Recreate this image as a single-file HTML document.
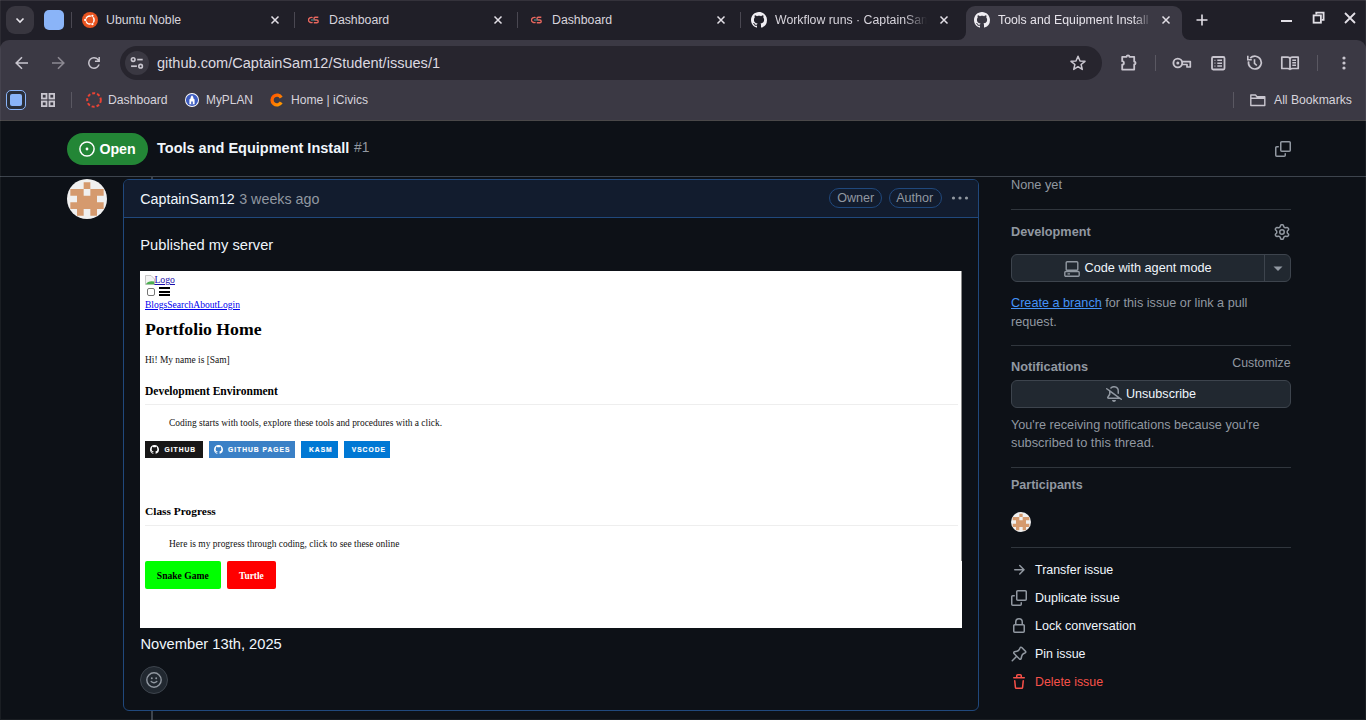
<!DOCTYPE html>
<html><head><meta charset="utf-8"><style>
html,body{margin:0;padding:0;width:1366px;height:720px;overflow:hidden;background:#0d1117;}
body{position:relative;font-family:'Liberation Sans', sans-serif;}
</style></head><body>
<div style="position:absolute;left:0px;top:0px;width:1366px;height:40px;background:#201f28;"></div><div style="position:absolute;left:0px;top:0px;width:1366px;height:1px;background:#34323b;"></div><div style="position:absolute;left:0px;top:40px;width:1366px;height:12px;background:#201f28;"></div><div style="position:absolute;left:0px;top:40px;width:1366px;height:80px;background:#3b3944;border-radius:9px 9px 0 0;"></div><div style="position:absolute;left:6px;top:6px;width:28px;height:28px;background:#38363f;border-radius:9px;"></div><svg style="position:absolute;left:13px;top:13px;" width="14" height="14" viewBox="0 0 14 14"><path d="M3.5 5.5 L7 9 L10.5 5.5" fill="none" stroke="#e8e6ec" stroke-width="1.6"/></svg><div style="position:absolute;left:44px;top:10px;width:20px;height:20px;background:#8ab4f8;border-radius:5px;"></div><div style="position:absolute;left:71px;top:12px;width:1px;height:16px;background:#4a4852;"></div><svg style="position:absolute;left:82px;top:12px;" width="16" height="16" viewBox="0 0 16 16"><circle cx="8" cy="8" r="8" fill="#e95420"/><circle cx="8" cy="8" r="4.1" fill="none" stroke="#fff" stroke-width="1.5"/><circle cx="3.2" cy="8" r="1.8" fill="#e95420"/><circle cx="10.4" cy="3.85" r="1.8" fill="#e95420"/><circle cx="10.4" cy="12.15" r="1.8" fill="#e95420"/><circle cx="3.2" cy="8" r="1.15" fill="#fff"/><circle cx="10.4" cy="3.85" r="1.15" fill="#fff"/><circle cx="10.4" cy="12.15" r="1.15" fill="#fff"/></svg><div style="position:absolute;left:106px;top:13.89px;font:400 12.3px/12.3px 'Liberation Sans', sans-serif;color:#d7d4dc;white-space:nowrap;">Ubuntu Noble</div><svg style="position:absolute;left:270px;top:15px;" width="10" height="10" viewBox="0 0 10 10"><path d="M1.5 1.5 L8.5 8.5 M8.5 1.5 L1.5 8.5" stroke="#e2dfe6" stroke-width="1.5"/></svg><div style="position:absolute;left:294px;top:12px;width:1px;height:16px;background:#4a4852;"></div><svg style="position:absolute;left:308px;top:16px;" width="11" height="8" viewBox="0 0 11 8"><path d="M4.6 1.6 A3 2.6 0 1 0 4.6 6.4" fill="none" stroke="#e8675e" stroke-width="1.4"/><path d="M10.3 1.2 H7.2 Q6 1.2 6 2.6 Q6 4 7.4 4 H8.8 Q10.2 4 10.2 5.4 Q10.2 6.8 8.8 6.8 H5.8" fill="none" stroke="#e8675e" stroke-width="1.4"/><path d="M3 4 H7" stroke="#4a8c8c" stroke-width="1.2"/></svg><div style="position:absolute;left:329px;top:13.89px;font:400 12.3px/12.3px 'Liberation Sans', sans-serif;color:#d7d4dc;white-space:nowrap;">Dashboard</div><svg style="position:absolute;left:493px;top:15px;" width="10" height="10" viewBox="0 0 10 10"><path d="M1.5 1.5 L8.5 8.5 M8.5 1.5 L1.5 8.5" stroke="#e2dfe6" stroke-width="1.5"/></svg><div style="position:absolute;left:517px;top:12px;width:1px;height:16px;background:#4a4852;"></div><svg style="position:absolute;left:531px;top:16px;" width="11" height="8" viewBox="0 0 11 8"><path d="M4.6 1.6 A3 2.6 0 1 0 4.6 6.4" fill="none" stroke="#e8675e" stroke-width="1.4"/><path d="M10.3 1.2 H7.2 Q6 1.2 6 2.6 Q6 4 7.4 4 H8.8 Q10.2 4 10.2 5.4 Q10.2 6.8 8.8 6.8 H5.8" fill="none" stroke="#e8675e" stroke-width="1.4"/><path d="M3 4 H7" stroke="#4a8c8c" stroke-width="1.2"/></svg><div style="position:absolute;left:552px;top:13.89px;font:400 12.3px/12.3px 'Liberation Sans', sans-serif;color:#d7d4dc;white-space:nowrap;">Dashboard</div><svg style="position:absolute;left:716px;top:15px;" width="10" height="10" viewBox="0 0 10 10"><path d="M1.5 1.5 L8.5 8.5 M8.5 1.5 L1.5 8.5" stroke="#e2dfe6" stroke-width="1.5"/></svg><div style="position:absolute;left:740px;top:12px;width:1px;height:16px;background:#4a4852;"></div><svg style="position:absolute;left:751px;top:12px;" width="16" height="16" viewBox="0 0 16 16"><path fill="#f0eef3" d="M8 0C3.58 0 0 3.58 0 8c0 3.54 2.29 6.53 5.47 7.59.4.07.55-.17.55-.38 0-.19-.01-.82-.01-1.49-2.01.37-2.53-.49-2.69-.94-.09-.23-.48-.94-.82-1.13-.28-.15-.68-.52-.01-.53.63-.01 1.08.58 1.23.82.72 1.21 1.87.87 2.33.66.07-.52.28-.87.51-1.07-1.78-.2-3.64-.89-3.64-3.95 0-.87.31-1.59.82-2.15-.08-.2-.36-1.02.08-2.12 0 0 .67-.21 2.2.82.64-.18 1.32-.27 2-.27.68 0 1.36.09 2 .27 1.53-1.04 2.2-.82 2.2-.82.44 1.1.16 1.92.08 2.12.51.56.82 1.27.82 2.15 0 3.07-1.87 3.75-3.65 3.95.29.25.54.73.54 1.48 0 1.07-.01 1.93-.01 2.2 0 .21.15.46.55.38A8.013 8.013 0 0016 8c0-4.42-3.58-8-8-8z"/></svg><div style="position:absolute;left:775px;top:13.89px;width:152px;overflow:hidden;font:400 12.3px/12.3px 'Liberation Sans', sans-serif;color:#d7d4dc;white-space:nowrap;-webkit-mask-image:linear-gradient(90deg,#000 85%,transparent);">Workflow runs · CaptainSam12/Student</div><svg style="position:absolute;left:939px;top:15px;" width="10" height="10" viewBox="0 0 10 10"><path d="M1.5 1.5 L8.5 8.5 M8.5 1.5 L1.5 8.5" stroke="#e2dfe6" stroke-width="1.5"/></svg><div style="position:absolute;left:966px;top:6px;width:216px;height:40px;background:#3b3944;border-radius:9px 9px 0 0;"></div><svg style="position:absolute;left:958px;top:32px;" width="8" height="8" viewBox="0 0 8 8"><path d="M8 0 V8 H0 A8 8 0 0 0 8 0Z" fill="#3b3944"/></svg><svg style="position:absolute;left:1182px;top:32px;" width="8" height="8" viewBox="0 0 8 8"><path d="M0 0 V8 H8 A8 8 0 0 1 0 0Z" fill="#3b3944"/></svg><svg style="position:absolute;left:974px;top:12px;" width="16" height="16" viewBox="0 0 16 16"><path fill="#f0eef3" d="M8 0C3.58 0 0 3.58 0 8c0 3.54 2.29 6.53 5.47 7.59.4.07.55-.17.55-.38 0-.19-.01-.82-.01-1.49-2.01.37-2.53-.49-2.69-.94-.09-.23-.48-.94-.82-1.13-.28-.15-.68-.52-.01-.53.63-.01 1.08.58 1.23.82.72 1.21 1.87.87 2.33.66.07-.52.28-.87.51-1.07-1.78-.2-3.64-.89-3.64-3.95 0-.87.31-1.59.82-2.15-.08-.2-.36-1.02.08-2.12 0 0 .67-.21 2.2.82.64-.18 1.32-.27 2-.27.68 0 1.36.09 2 .27 1.53-1.04 2.2-.82 2.2-.82.44 1.1.16 1.92.08 2.12.51.56.82 1.27.82 2.15 0 3.07-1.87 3.75-3.65 3.95.29.25.54.73.54 1.48 0 1.07-.01 1.93-.01 2.2 0 .21.15.46.55.38A8.013 8.013 0 0016 8c0-4.42-3.58-8-8-8z"/></svg><div style="position:absolute;left:998px;top:13.89px;width:154px;overflow:hidden;font:400 12.3px/12.3px 'Liberation Sans', sans-serif;color:#e6e3ea;white-space:nowrap;-webkit-mask-image:linear-gradient(90deg,#000 88%,transparent);">Tools and Equipment Install #1</div><svg style="position:absolute;left:1161px;top:15px;" width="10" height="10" viewBox="0 0 10 10"><path d="M1.5 1.5 L8.5 8.5 M8.5 1.5 L1.5 8.5" stroke="#e2dfe6" stroke-width="1.5"/></svg><svg style="position:absolute;left:1195px;top:13px;" width="14" height="14" viewBox="0 0 14 14"><path d="M7 1.5 V12.5 M1.5 7 H12.5" stroke="#e2dfe6" stroke-width="1.6"/></svg><div style="position:absolute;left:1281px;top:20px;width:11px;height:2px;background:#e2dfe6;"></div><svg style="position:absolute;left:1311px;top:10px;" width="16" height="16" viewBox="0 0 16 16"><path d="M5.3 4.6 V2.6 H12.6 V9.9 H10.6" fill="none" stroke="#e2dfe6" stroke-width="1.8"/><rect x="2.6" y="5.4" width="7.3" height="7.3" fill="none" stroke="#e2dfe6" stroke-width="1.8"/></svg><svg style="position:absolute;left:1343px;top:11px;" width="14" height="14" viewBox="0 0 14 14"><path d="M2 2 L12 12 M12 2 L2 12" stroke="#e2dfe6" stroke-width="1.8"/></svg><svg style="position:absolute;left:12px;top:53px;" width="20" height="20" viewBox="0 0 20 20"><path d="M16 10 H4.5 M10 4.2 L4.2 10 L10 15.8" fill="none" stroke="#c9c6cf" stroke-width="1.6"/></svg><svg style="position:absolute;left:48px;top:53px;" width="20" height="20" viewBox="0 0 20 20"><path d="M4 10 H15.5 M10 4.2 L15.8 10 L10 15.8" fill="none" stroke="#8c8992" stroke-width="1.6"/></svg><svg style="position:absolute;left:84px;top:53px;" width="20" height="20" viewBox="0 0 20 20"><path fill="#c9c6cf" d="M10 16q-2.5 0-4.25-1.75T4 10q0-2.5 1.75-4.25T10 4q1.35 0 2.5.55t1.95 1.5V4h1.5v5h-5V7.5h2.85q-.6-.95-1.6-1.475T10 5.5q-1.875 0-3.187 1.313Q5.5 8.125 5.5 10t1.313 3.188Q8.125 14.5 10 14.5q1.4 0 2.55-.8t1.6-2.2h1.6q-.55 2.050-2.212 3.275Q11.875 16 10 16Z"/></svg><div style="position:absolute;left:120px;top:46px;width:982px;height:34px;background:#27252e;border-radius:17px;"></div><div style="position:absolute;left:125px;top:51px;width:24px;height:24px;border-radius:12px;background:#3a3842;"></div><svg style="position:absolute;left:127px;top:53px;" width="20" height="20" viewBox="0 0 20 20"><circle cx="6.2" cy="6.6" r="1.8" fill="none" stroke="#c9c6cf" stroke-width="1.6"/><path d="M10.2 6.6 H15.7" stroke="#c9c6cf" stroke-width="1.7"/><circle cx="13.6" cy="13.2" r="1.8" fill="none" stroke="#c9c6cf" stroke-width="1.6"/><path d="M4.1 13.2 H9.9" stroke="#c9c6cf" stroke-width="1.7"/></svg><div style="position:absolute;left:157px;top:55.69px;font:400 14.55px/14.55px 'Liberation Sans', sans-serif;color:#dcd9e0;white-space:nowrap;">github.com/CaptainSam12/Student/issues/1</div><svg style="position:absolute;left:1068px;top:53px;" width="20" height="20" viewBox="0 0 20 20"><path d="M10 3.2 L12 8 L17 8.3 L13.1 11.5 L14.3 16.4 L10 13.7 L5.7 16.4 L6.9 11.5 L3 8.3 L8 8 Z" fill="none" stroke="#c9c6cf" stroke-width="1.5" stroke-linejoin="round"/></svg><svg style="position:absolute;left:1118px;top:53px;" width="22" height="20" viewBox="0 0 22 20"><path d="M4.2 3.8 H8.6 A1.4 1.4 0 0 1 11.4 3.8 H16.2 V8.6 A1.4 1.4 0 0 1 16.2 11.4 V16.6 H4.2 V11.6 A1.7 1.7 0 0 0 4.2 8.2 Z" fill="none" stroke="#c9c6cf" stroke-width="1.8" stroke-linejoin="round"/></svg><div style="position:absolute;left:1155px;top:55px;width:1px;height:16px;background:#5a5862;"></div><svg style="position:absolute;left:1170px;top:53px;" width="24" height="20" viewBox="0 0 24 20"><circle cx="7.8" cy="10" r="4.4" fill="none" stroke="#c9c6cf" stroke-width="1.9"/><circle cx="7.8" cy="10" r="1.5" fill="#c9c6cf"/><path d="M12 8.6 H20.3 V14 H17 V11.5 H12" fill="none" stroke="#c9c6cf" stroke-width="1.7" stroke-linejoin="round"/></svg><svg style="position:absolute;left:1208px;top:53px;" width="20" height="20" viewBox="0 0 20 20"><rect x="4" y="4" width="12.5" height="12.5" rx="1.2" fill="none" stroke="#c9c6cf" stroke-width="1.8"/><path d="M6.5 7.3 H7.4 M6.5 10.2 H7.4 M6.5 13.1 H7.4" stroke="#c9c6cf" stroke-width="1.2"/><path d="M9.3 7.3 H14 M9.3 10.2 H14 M9.3 13.1 H14" stroke="#c9c6cf" stroke-width="1.5"/></svg><svg style="position:absolute;left:1244px;top:53px;" width="20" height="20" viewBox="0 0 20 20"><path d="M4.6 8.3 A6.4 6.4 0 1 0 6.2 5.2" fill="none" stroke="#c9c6cf" stroke-width="1.7"/><path d="M3.8 2.8 V6.8 H7.8" fill="none" stroke="#c9c6cf" stroke-width="1.6"/><path d="M10.5 6.2 V10.3 L12.8 12.5" fill="none" stroke="#c9c6cf" stroke-width="1.6"/></svg><svg style="position:absolute;left:1280px;top:53px;" width="20" height="20" viewBox="0 0 20 20"><path d="M1.8 4.2 H7.5 Q10 4.2 10 6.2 V16.3 Q9.6 15.5 7.5 15.5 H1.8 Z M18.2 4.2 H12.5 Q10 4.2 10 6.2 V16.3 Q10.4 15.5 12.5 15.5 H18.2 Z" fill="none" stroke="#c9c6cf" stroke-width="1.7" stroke-linejoin="round"/><path d="M12.3 7.3 H16 M12.3 9.8 H16 M12.3 12.3 H16" stroke="#c9c6cf" stroke-width="1.4"/></svg><div style="position:absolute;left:1317px;top:55px;width:1px;height:16px;background:#5a5862;"></div><svg style="position:absolute;left:1339px;top:53px;" width="10" height="20" viewBox="0 0 10 20"><circle cx="5" cy="5" r="1.6" fill="#c9c6cf"/><circle cx="5" cy="10" r="1.6" fill="#c9c6cf"/><circle cx="5" cy="15" r="1.6" fill="#c9c6cf"/></svg><div style="position:absolute;left:6px;top:90px;width:18px;height:18px;border:1px solid #8ab4f8;border-radius:5px;background:#2a2f3a;"></div><div style="position:absolute;left:10px;top:94px;width:12px;height:12px;background:#8ab4f8;border-radius:2px;"></div><svg style="position:absolute;left:40px;top:92px;" width="16" height="16" viewBox="0 0 16 16"><rect x="1.9" y="1.9" width="4.6" height="4.6" fill="none" stroke="#c9c6cf" stroke-width="1.8"/><rect x="9.5" y="1.9" width="4.6" height="4.6" fill="none" stroke="#c9c6cf" stroke-width="1.8"/><rect x="1.9" y="9.5" width="4.6" height="4.6" fill="none" stroke="#c9c6cf" stroke-width="1.8"/><rect x="9.5" y="9.5" width="4.6" height="4.6" fill="none" stroke="#c9c6cf" stroke-width="1.8"/></svg><div style="position:absolute;left:71px;top:92px;width:1px;height:16px;background:#5a5862;"></div><svg style="position:absolute;left:86px;top:92px;" width="16" height="16" viewBox="0 0 16 16"><circle cx="8" cy="8" r="6.8" fill="none" stroke="#ea4335" stroke-width="2" stroke-dasharray="3 2"/></svg><div style="position:absolute;left:108px;top:94.18px;font:400 12.2px/12.2px 'Liberation Sans', sans-serif;color:#d7d4dc;white-space:nowrap;">Dashboard</div><svg style="position:absolute;left:184px;top:92px;" width="16" height="16" viewBox="0 0 16 16"><circle cx="8" cy="8" r="7" fill="#fff"/><circle cx="8" cy="8" r="6.1" fill="#3d5cc0"/><path d="M8 3.2 L9.3 5 V6.3 L10.6 7.5 V12.3 H5.4 V7.5 L6.7 6.3 V5 Z" fill="#fff"/><rect x="7.2" y="9.5" width="1.6" height="2.8" fill="#3d5cc0"/></svg><div style="position:absolute;left:206px;top:95.23px;font:400 11.9px/11.9px 'Liberation Sans', sans-serif;color:#d7d4dc;white-space:nowrap;">MyPLAN</div><svg style="position:absolute;left:269px;top:92px;" width="16" height="16" viewBox="0 0 16 16"><defs><linearGradient id="icg" x1="0" y1="0" x2="1" y2="1"><stop offset="0" stop-color="#ff5500"/><stop offset="1" stop-color="#ff9a00"/></linearGradient></defs><path d="M12.2 5.6 A4.9 4.9 0 1 0 12.2 10.4" fill="none" stroke="url(#icg)" stroke-width="3.3"/></svg><div style="position:absolute;left:291px;top:94.26px;font:400 12.1px/12.1px 'Liberation Sans', sans-serif;color:#d7d4dc;white-space:nowrap;">Home | iCivics</div><div style="position:absolute;left:1233px;top:92px;width:1px;height:16px;background:#5a5862;"></div><svg style="position:absolute;left:1249px;top:92px;" width="18" height="16" viewBox="0 0 18 16"><path d="M1.8 3 H6.5 L8 4.7 H15.8 V13.5 H1.8 Z M1.8 6.2 H15.8" fill="none" stroke="#c9c6cf" stroke-width="1.4" stroke-linejoin="round"/></svg><div style="position:absolute;left:1274px;top:94.18px;font:400 12.2px/12.2px 'Liberation Sans', sans-serif;color:#d7d4dc;white-space:nowrap;">All Bookmarks</div><div style="position:absolute;left:0px;top:120px;width:1366px;height:600px;background:#0d1117;"></div><div style="position:absolute;left:151px;top:176px;width:2px;height:544px;background:#3d444d;"></div><div style="position:absolute;left:0px;top:120px;width:1366px;height:56px;background:#0d1117;"></div><div style="position:absolute;left:0px;top:176px;width:1366px;height:1px;background:#3d444d;"></div><div style="position:absolute;left:67px;top:133px;width:81px;height:32px;border-radius:16px;background:#238636;"></div><svg style="position:absolute;left:79px;top:141px;" width="16" height="16" viewBox="0 0 16 16"><circle cx="8" cy="8" r="7.1" fill="none" stroke="#fff" stroke-width="1.5"/><circle cx="8" cy="8" r="1.4" fill="#fff"/></svg><div style="position:absolute;left:99.4px;top:142.29px;font:700 14.2px/14.2px 'Liberation Sans', sans-serif;color:#ffffff;white-space:nowrap;">Open</div><div style="position:absolute;left:157px;top:140.93px;font:700 14.5px/14.5px 'Liberation Sans', sans-serif;color:#f0f6fc;white-space:nowrap;">Tools and Equipment Install</div><div style="position:absolute;left:354px;top:141.03px;font:400 13.8px/13.8px 'Liberation Sans', sans-serif;color:#9198a1;white-space:nowrap;">#1</div><svg style="position:absolute;left:1275px;top:141px;" width="16" height="16" viewBox="0 0 16 16"><path fill="#9198a1" d="M0 6.75C0 5.784.784 5 1.75 5h1.5a.75.75 0 0 1 0 1.5h-1.5a.25.25 0 0 0-.25.25v7.5c0 .138.112.25.25.25h7.5a.25.25 0 0 0 .25-.25v-1.5a.75.75 0 0 1 1.5 0v1.5A1.75 1.75 0 0 1 9.25 16h-7.5A1.75 1.75 0 0 1 0 14.25Z"/><path fill="#9198a1" d="M5 1.75C5 .784 5.784 0 6.75 0h7.5C15.216 0 16 .784 16 1.75v7.5A1.75 1.75 0 0 1 14.25 11h-7.5A1.75 1.75 0 0 1 5 9.25Zm1.75-.25a.25.25 0 0 0-.25.25v7.5c0 .138.112.25.25.25h7.5a.25.25 0 0 0 .25-.25v-7.5a.25.25 0 0 0-.25-.25Z"/></svg><svg style="position:absolute;left:67px;top:179px;" width="40" height="40" viewBox="0 0 40 40"><clipPath id="c67"><circle cx="20.0" cy="20.0" r="20.0"/></clipPath><g clip-path="url(#c67)"><rect width="40" height="40" fill="#f0f0f0"/><path d="M16.667 3.333h6.667v6.667h-6.667ZM3.333 10.000h6.667v6.667h-6.667ZM10.000 10.000h6.667v6.667h-6.667ZM23.333 10.000h6.667v6.667h-6.667ZM30.000 10.000h6.667v6.667h-6.667ZM10.000 16.667h6.667v6.667h-6.667ZM16.667 16.667h6.667v6.667h-6.667ZM23.333 16.667h6.667v6.667h-6.667ZM3.333 23.333h6.667v6.667h-6.667ZM10.000 23.333h6.667v6.667h-6.667ZM16.667 23.333h6.667v6.667h-6.667ZM23.333 23.333h6.667v6.667h-6.667ZM30.000 23.333h6.667v6.667h-6.667ZM10.000 30.000h6.667v6.667h-6.667ZM23.333 30.000h6.667v6.667h-6.667Z" fill="#d59a6e"/></g></svg><div style="position:absolute;left:123px;top:179px;width:854px;height:530px;border:1px solid #20487c;border-radius:6px;background:#0d1117;overflow:hidden;"><div style="position:absolute;left:0;top:0;width:854px;height:37px;background:#121c2e;border-bottom:1px solid #20487c;"></div></div><div style="position:absolute;left:140.3px;top:192.13px;font:400 14.27px/14.27px 'Liberation Sans', sans-serif;color:#f0f6fc;white-space:nowrap;">CaptainSam12</div><div style="position:absolute;left:239.2px;top:192.10px;font:400 14.3px/14.3px 'Liberation Sans', sans-serif;color:#9198a1;white-space:nowrap;">3 weeks ago</div><div style="position:absolute;left:829px;top:188px;width:51px;height:18px;border:1px solid #20487c;border-radius:10px;"></div><div style="position:absolute;left:837.15px;top:191.64px;font:400 12.6px/12.6px 'Liberation Sans', sans-serif;color:#9198a1;white-space:nowrap;">Owner</div><div style="position:absolute;left:889px;top:188px;width:51px;height:18px;border:1px solid #20487c;border-radius:10px;"></div><div style="position:absolute;left:896.15px;top:191.64px;font:400 12.6px/12.6px 'Liberation Sans', sans-serif;color:#9198a1;white-space:nowrap;">Author</div><svg style="position:absolute;left:951px;top:190px;" width="18" height="16" viewBox="0 0 18 16"><circle cx="2.5" cy="8" r="1.6" fill="#9198a1"/><circle cx="9" cy="8" r="1.6" fill="#9198a1"/><circle cx="15.5" cy="8" r="1.6" fill="#9198a1"/></svg><div style="position:absolute;left:140.3px;top:237.58px;font:400 14.68px/14.68px 'Liberation Sans', sans-serif;color:#f0f6fc;white-space:nowrap;">Published my server</div><div style="position:absolute;left:140px;top:271px;width:822px;height:357px;background:#fff;overflow:hidden;"><svg style="position:absolute;left:5px;top:4px" width="10" height="10" viewBox="0 0 10 10"><path d="M0.5 9.5 V0.5 H6 L9.5 4 V9.5 Z" fill="#f4f4f4" stroke="#bbb" stroke-width="0.8"/><path d="M0.8 9.2 Q3 5.5 9.2 6.5 V9.2 Z" fill="#4caf50"/></svg><div style="position:absolute;left:14.400000000000006px;top:4.33px;font:400 9.76px/9.76px 'Liberation Serif', serif;color:#1a0dab;white-space:nowrap;text-decoration:underline;">Logo</div><div style="position:absolute;left:7px;top:17px;width:8px;height:8px;background:#fff;border:1px solid #767676;border-radius:2px;box-sizing:border-box;"></div><div style="position:absolute;left:19px;top:16px;width:11px;height:2px;background:#000;"></div><div style="position:absolute;left:19px;top:19.5px;width:11px;height:2px;background:#000;"></div><div style="position:absolute;left:19px;top:23px;width:11px;height:2px;background:#000;"></div><div style="position:absolute;left:5px;top:29.00px;font:400 9.55px/9.55px 'Liberation Serif', serif;color:#0000ee;white-space:nowrap;text-decoration:underline;">BlogsSearchAboutLogin</div><div style="position:absolute;left:5px;top:50.25px;font:700 17.73px/17.73px 'Liberation Serif', serif;color:#000;white-space:nowrap;">Portfolio Home</div><div style="position:absolute;left:5px;top:85.41px;font:400 9.42px/9.42px 'Liberation Serif', serif;color:#111;white-space:nowrap;">Hi! My name is [Sam]</div><div style="position:absolute;left:5px;top:115.23px;font:700 11.55px/11.55px 'Liberation Serif', serif;color:#000;white-space:nowrap;">Development Environment</div><div style="position:absolute;left:5px;top:133px;width:813px;height:1px;background:#eeeeee;"></div><div style="position:absolute;left:29px;top:147.91px;font:400 9.42px/9.42px 'Liberation Serif', serif;color:#111;white-space:nowrap;">Coding starts with tools, explore these tools and procedures with a click.</div><div style="position:absolute;left:5px;top:170px;width:58px;height:17px;background:#181717;"></div><svg style="position:absolute;left:10px;top:174px" width="9" height="9" viewBox="0 0 16 16"><path fill="#fff" d="M8 0C3.58 0 0 3.58 0 8c0 3.54 2.29 6.53 5.47 7.59.4.07.55-.17.55-.38 0-.19-.01-.82-.01-1.49-2.01.37-2.53-.49-2.69-.94-.09-.23-.48-.94-.82-1.13-.28-.15-.68-.52-.01-.53.63-.01 1.08.58 1.23.82.72 1.21 1.87.87 2.33.66.07-.52.28-.87.51-1.07-1.78-.2-3.64-.89-3.64-3.95 0-.87.31-1.59.82-2.15-.08-.2-.36-1.02.08-2.12 0 0 .67-.21 2.2.82.64-.18 1.32-.27 2-.27.68 0 1.36.09 2 .27 1.53-1.04 2.2-.82 2.2-.82.44 1.1.16 1.92.08 2.12.51.56.82 1.27.82 2.15 0 3.07-1.87 3.75-3.65 3.95.29.25.54.73.54 1.48 0 1.07-.01 1.93-.01 2.2 0 .21.15.46.55.38A8.013 8.013 0 0016 8c0-4.42-3.58-8-8-8z"/></svg><div style="position:absolute;left:24.5px;top:170px;height:17px;font:700 6.7px/17px 'Liberation Sans', sans-serif;letter-spacing:1.0px;-webkit-text-stroke:0.15px #fff;color:#fff;white-space:nowrap;">GITHUB</div><div style="position:absolute;left:69px;top:170px;width:86px;height:17px;background:#3a80c6;"></div><svg style="position:absolute;left:74px;top:174px" width="9" height="9" viewBox="0 0 16 16"><path fill="#fff" d="M8 0C3.58 0 0 3.58 0 8c0 3.54 2.29 6.53 5.47 7.59.4.07.55-.17.55-.38 0-.19-.01-.82-.01-1.49-2.01.37-2.53-.49-2.69-.94-.09-.23-.48-.94-.82-1.13-.28-.15-.68-.52-.01-.53.63-.01 1.08.58 1.23.82.72 1.21 1.87.87 2.33.66.07-.52.28-.87.51-1.07-1.78-.2-3.64-.89-3.64-3.95 0-.87.31-1.59.82-2.15-.08-.2-.36-1.02.08-2.12 0 0 .67-.21 2.2.82.64-.18 1.32-.27 2-.27.68 0 1.36.09 2 .27 1.53-1.04 2.2-.82 2.2-.82.44 1.1.16 1.92.08 2.12.51.56.82 1.27.82 2.15 0 3.07-1.87 3.75-3.65 3.95.29.25.54.73.54 1.48 0 1.07-.01 1.93-.01 2.2 0 .21.15.46.55.38A8.013 8.013 0 0016 8c0-4.42-3.58-8-8-8z"/></svg><div style="position:absolute;left:88px;top:170px;height:17px;font:700 6.7px/17px 'Liberation Sans', sans-serif;letter-spacing:1.0px;-webkit-text-stroke:0.15px #fff;color:#fff;white-space:nowrap;">GITHUB PAGES</div><div style="position:absolute;left:161px;top:170px;width:37px;height:17px;background:#0078d4;"></div><div style="position:absolute;left:169px;top:170px;height:17px;font:700 6.7px/17px 'Liberation Sans', sans-serif;letter-spacing:1.0px;-webkit-text-stroke:0.15px #fff;color:#fff;white-space:nowrap;">KASM</div><div style="position:absolute;left:204px;top:170px;width:46px;height:17px;background:#0078d4;"></div><div style="position:absolute;left:211.7px;top:170px;height:17px;font:700 6.7px/17px 'Liberation Sans', sans-serif;letter-spacing:1.0px;-webkit-text-stroke:0.15px #fff;color:#fff;white-space:nowrap;">VSCODE</div><div style="position:absolute;left:5px;top:235.25px;font:700 11.4px/11.4px 'Liberation Serif', serif;color:#000;white-space:nowrap;">Class Progress</div><div style="position:absolute;left:5px;top:254px;width:813px;height:1px;background:#eeeeee;"></div><div style="position:absolute;left:29px;top:268.59px;font:400 9.45px/9.45px 'Liberation Serif', serif;color:#111;white-space:nowrap;">Here is my progress through coding, click to see these online</div><div style="position:absolute;left:5px;top:290px;width:76px;height:28px;background:#00ff00;border-radius:2px;"></div><div style="position:absolute;left:16.80000000000001px;top:299.76px;font:700 9.6px/9.6px 'Liberation Serif', serif;color:#000;white-space:nowrap;">Snake Game</div><div style="position:absolute;left:87px;top:290px;width:49px;height:28px;background:#ff0000;border-radius:2px;"></div><div style="position:absolute;left:99px;top:300.70px;font:700 9.43px/9.43px 'Liberation Serif', serif;color:#fff;white-space:nowrap;">Turtle</div><div style="position:absolute;left:821px;top:0px;width:1px;height:290px;background:#8a8a8a;"></div></div><div style="position:absolute;left:140.5px;top:636.77px;font:400 14.69px/14.69px 'Liberation Sans', sans-serif;color:#f0f6fc;white-space:nowrap;">November 13th, 2025</div><div style="position:absolute;left:140px;top:666px;width:26px;height:26px;border:1px solid #3d444d;border-radius:14px;background:#212830;"></div><svg style="position:absolute;left:146px;top:672px;" width="16" height="16" viewBox="0 0 16 16"><circle cx="8" cy="8" r="7.2" fill="none" stroke="#9198a1" stroke-width="1.4"/><circle cx="5.8" cy="6.3" r="0.95" fill="#9198a1"/><circle cx="10.2" cy="6.3" r="0.95" fill="#9198a1"/><path d="M5.2 9.5 Q8 12 10.8 9.5" fill="none" stroke="#9198a1" stroke-width="1.4" stroke-linecap="round"/></svg><div style="position:absolute;left:1011px;top:178.52px;font:400 12.74px/12.74px 'Liberation Sans', sans-serif;color:#9198a1;white-space:nowrap;">None yet</div><div style="position:absolute;left:1011px;top:209px;width:280px;height:1px;background:#30363d;"></div><div style="position:absolute;left:1011px;top:226.26px;font:700 12.69px/12.69px 'Liberation Sans', sans-serif;color:#9198a1;white-space:nowrap;">Development</div><svg style="position:absolute;left:1274px;top:224px;" width="16" height="16" viewBox="0 0 16 16"><path fill="#9198a1" d="M8 0a8.2 8.2 0 0 1 .701.031C9.444.095 9.99.645 10.16 1.29l.288 1.107c.018.066.079.158.212.224.231.114.454.243.668.386.123.082.233.09.299.071l1.103-.303c.644-.176 1.392.021 1.82.63.27.385.506.792.704 1.218.315.675.111 1.422-.364 1.891l-.814.806c-.049.048-.098.147-.088.294.016.257.016.515 0 .772-.01.147.038.246.088.294l.814.806c.475.469.679 1.216.364 1.891a7.977 7.977 0 0 1-.704 1.217c-.428.61-1.176.807-1.82.63l-1.102-.302c-.067-.019-.177-.011-.3.071a5.909 5.909 0 0 1-.668.386c-.133.066-.194.158-.211.224l-.29 1.106c-.168.646-.715 1.196-1.458 1.26a8.006 8.006 0 0 1-1.402 0c-.743-.064-1.289-.614-1.458-1.26l-.289-1.106c-.018-.066-.079-.158-.212-.224a5.738 5.738 0 0 1-.668-.386c-.123-.082-.233-.09-.299-.071l-1.103.303c-.644.176-1.392-.021-1.82-.63a8.12 8.12 0 0 1-.704-1.218c-.315-.675-.111-1.422.363-1.891l.815-.806c.05-.048.098-.147.088-.294a6.214 6.214 0 0 1 0-.772c.01-.147-.038-.246-.088-.294l-.815-.806C.635 6.045.431 5.298.746 4.623a7.92 7.92 0 0 1 .704-1.217c.428-.61 1.176-.807 1.82-.63l1.102.302c.067.019.177.011.3-.071.214-.143.437-.272.668-.386.133-.066.194-.158.211-.224l.29-1.106C6.009.645 6.556.095 7.299.03 7.53.01 7.764 0 8 0Zm-.571 1.525c-.036.003-.108.036-.137.146l-.289 1.105c-.147.561-.549.967-.998 1.189-.173.086-.34.183-.5.29-.417.278-.97.423-1.529.27l-1.103-.303c-.109-.03-.175.016-.195.045-.22.312-.412.644-.573.99-.014.031-.021.11.059.19l.815.806c.411.406.562.957.53 1.456a4.709 4.709 0 0 0 0 .582c.032.499-.119 1.05-.53 1.456l-.815.806c-.081.08-.073.159-.059.19.162.346.353.677.573.989.02.03.085.076.195.046l1.102-.303c.56-.153 1.113-.008 1.53.27.161.107.328.204.501.29.447.222.85.629.997 1.189l.289 1.105c.029.109.101.143.137.146a6.6 6.6 0 0 0 1.142 0c.036-.003.108-.036.137-.146l.289-1.105c.147-.561.549-.967.998-1.189.173-.086.34-.183.5-.29.417-.278.97-.423 1.529-.27l1.103.303c.109.029.175-.016.195-.045.22-.313.411-.644.573-.99.014-.031.021-.11-.059-.19l-.815-.806c-.411-.406-.562-.957-.53-1.456a4.709 4.709 0 0 0 0-.582c-.032-.499.119-1.05.53-1.456l.815-.806c.081-.08.073-.159.059-.19a6.464 6.464 0 0 0-.573-.989c-.02-.03-.085-.076-.195-.046l-1.102.303c-.56.153-1.113.008-1.53-.27a4.44 4.44 0 0 0-.501-.29c-.447-.222-.85-.629-.997-1.189l-.289-1.105c-.029-.11-.101-.143-.137-.146a6.6 6.6 0 0 0-1.142 0ZM11 8a3 3 0 1 1-6 0 3 3 0 0 1 6 0ZM9.5 8a1.5 1.5 0 1 0-3.001.001A1.5 1.5 0 0 0 9.5 8Z"/></svg><div style="position:absolute;left:1011px;top:254px;width:278px;height:26px;border:1px solid #3d444d;border-radius:6px;background:#212830;"></div><div style="position:absolute;left:1264px;top:255px;width:1px;height:26px;background:#3d444d;"></div><svg style="position:absolute;left:1064px;top:261px;" width="16" height="16" viewBox="0 0 16 16"><rect x="2.2" y="0.8" width="11.6" height="8.4" rx="1" fill="none" stroke="#9198a1" stroke-width="1.4"/><rect x="0.8" y="10.5" width="14.4" height="4.7" rx="1" fill="none" stroke="#9198a1" stroke-width="1.4"/><path d="M3.5 12.9 H6" stroke="#9198a1" stroke-width="1.3"/></svg><div style="position:absolute;left:1084.6px;top:261.56px;font:400 12.69px/12.69px 'Liberation Sans', sans-serif;color:#f0f6fc;white-space:nowrap;">Code with agent mode</div><svg style="position:absolute;left:1272px;top:265px;" width="12" height="8" viewBox="0 0 12 8"><path d="M1.5 1.5 L6 6 L10.5 1.5 Z" fill="#9198a1"/></svg><div style="position:absolute;left:1011px;top:297.09px;font:400 12.66px/12.66px 'Liberation Sans', sans-serif;color:#9198a1;white-space:nowrap;"><span style="color:#4493f8;text-decoration:underline;">Create a branch</span> for this issue or link a pull</div><div style="position:absolute;left:1011px;top:315.79px;font:400 12.66px/12.66px 'Liberation Sans', sans-serif;color:#9198a1;white-space:nowrap;">request.</div><div style="position:absolute;left:1011px;top:345px;width:280px;height:1px;background:#30363d;"></div><div style="position:absolute;left:1011px;top:360.71px;font:700 12.76px/12.76px 'Liberation Sans', sans-serif;color:#9198a1;white-space:nowrap;">Notifications</div><div style="position:absolute;right:75.5px;top:357.26px;font:400 12.34px/12.34px 'Liberation Sans', sans-serif;color:#9198a1;white-space:nowrap;">Customize</div><div style="position:absolute;left:1011px;top:380px;width:278px;height:26px;border:1px solid #3d444d;border-radius:6px;background:#212830;"></div><svg style="position:absolute;left:1106px;top:386px;" width="16" height="16" viewBox="0 0 16 16"><path fill="#9198a1" d="m4.182 4.31.016.011 10.104 7.316.013.01 1.375.996a.75.75 0 1 1-.88 1.214L13.626 13H2.518a1.516 1.516 0 0 1-1.263-2.36l1.703-2.554A.255.255 0 0 0 3 7.947V5.305L.31 3.357a.75.75 0 1 1 .88-1.214Zm7.373 7.19L4.5 6.391v1.556c0 .346-.102.683-.294.97l-1.703 2.556a.017.017 0 0 0-.003.01c0 .005.002.009.005.012l.006.004.007.001ZM8 1.5c-.997 0-1.895.416-2.534 1.086A.75.75 0 1 1 4.38 1.55 5 5 0 0 1 13 5v2.373a.75.75 0 0 1-1.5 0V5A3.5 3.5 0 0 0 8 1.5ZM8 16a2 2 0 0 1-1.985-1.75c-.017-.137.097-.25.235-.25h3.5c.138 0 .252.113.235.25A2 2 0 0 1 8 16Z"/></svg><div style="position:absolute;left:1126px;top:388.35px;font:400 12.59px/12.59px 'Liberation Sans', sans-serif;color:#f0f6fc;white-space:nowrap;">Unsubscribe</div><div style="position:absolute;left:1011px;top:419.28px;font:400 12.67px/12.67px 'Liberation Sans', sans-serif;color:#9198a1;white-space:nowrap;">You're receiving notifications because you're</div><div style="position:absolute;left:1011px;top:436.85px;font:400 12.83px/12.83px 'Liberation Sans', sans-serif;color:#9198a1;white-space:nowrap;">subscribed to this thread.</div><div style="position:absolute;left:1011px;top:467px;width:280px;height:1px;background:#30363d;"></div><div style="position:absolute;left:1011px;top:479.40px;font:700 12.53px/12.53px 'Liberation Sans', sans-serif;color:#9198a1;white-space:nowrap;">Participants</div><svg style="position:absolute;left:1011px;top:512px;" width="20" height="20" viewBox="0 0 20 20"><clipPath id="c1011"><circle cx="10.0" cy="10.0" r="10.0"/></clipPath><g clip-path="url(#c1011)"><rect width="20" height="20" fill="#f0f0f0"/><path d="M8.333 1.667h3.333v3.333h-3.333ZM1.667 5.000h3.333v3.333h-3.333ZM5.000 5.000h3.333v3.333h-3.333ZM11.667 5.000h3.333v3.333h-3.333ZM15.000 5.000h3.333v3.333h-3.333ZM5.000 8.333h3.333v3.333h-3.333ZM8.333 8.333h3.333v3.333h-3.333ZM11.667 8.333h3.333v3.333h-3.333ZM1.667 11.667h3.333v3.333h-3.333ZM5.000 11.667h3.333v3.333h-3.333ZM8.333 11.667h3.333v3.333h-3.333ZM11.667 11.667h3.333v3.333h-3.333ZM15.000 11.667h3.333v3.333h-3.333ZM5.000 15.000h3.333v3.333h-3.333ZM11.667 15.000h3.333v3.333h-3.333Z" fill="#d59a6e"/></g></svg><div style="position:absolute;left:1011px;top:547px;width:280px;height:1px;background:#30363d;"></div><svg style="position:absolute;left:1011px;top:562px;" width="16" height="16" viewBox="0 0 16 16"><path fill="#9198a1" d="M8.22 2.97a.75.75 0 0 1 1.06 0l4.25 4.25a.75.75 0 0 1 0 1.06l-4.25 4.25a.751.751 0 0 1-1.042-.018.751.751 0 0 1-.018-1.042l2.97-2.97H3.75a.75.75 0 0 1 0-1.5h7.44L8.22 4.03a.75.75 0 0 1 0-1.06Z"/></svg><div style="position:absolute;left:1035px;top:564.48px;font:400 12.43px/12.43px 'Liberation Sans', sans-serif;color:#f0f6fc;white-space:nowrap;">Transfer issue</div><svg style="position:absolute;left:1011px;top:590px;" width="16" height="16" viewBox="0 0 16 16"><path fill="#9198a1" d="M0 6.75C0 5.784.784 5 1.75 5h1.5a.75.75 0 0 1 0 1.5h-1.5a.25.25 0 0 0-.25.25v7.5c0 .138.112.25.25.25h7.5a.25.25 0 0 0 .25-.25v-1.5a.75.75 0 0 1 1.5 0v1.5A1.75 1.75 0 0 1 9.25 16h-7.5A1.75 1.75 0 0 1 0 14.25Z"/><path fill="#9198a1" d="M5 1.75C5 .784 5.784 0 6.75 0h7.5C15.216 0 16 .784 16 1.75v7.5A1.75 1.75 0 0 1 14.25 11h-7.5A1.75 1.75 0 0 1 5 9.25Zm1.75-.25a.25.25 0 0 0-.25.25v7.5c0 .138.112.25.25.25h7.5a.25.25 0 0 0 .25-.25v-7.5a.25.25 0 0 0-.25-.25Z"/></svg><div style="position:absolute;left:1035px;top:592.43px;font:400 12.49px/12.49px 'Liberation Sans', sans-serif;color:#f0f6fc;white-space:nowrap;">Duplicate issue</div><svg style="position:absolute;left:1011px;top:618px;" width="16" height="16" viewBox="0 0 16 16"><path fill="#9198a1" d="M4 4a4 4 0 0 1 8 0v2h.25c.966 0 1.75.784 1.75 1.75v5.5A1.75 1.75 0 0 1 12.25 15h-8.5A1.75 1.75 0 0 1 2 13.25v-5.5C2 6.784 2.784 6 3.75 6H4Zm8.25 3.5h-8.5a.25.25 0 0 0-.25.25v5.5c0 .138.112.25.25.25h8.5a.25.25 0 0 0 .25-.25v-5.5a.25.25 0 0 0-.25-.25ZM10.5 6V4a2.5 2.5 0 1 0-5 0v2Z"/></svg><div style="position:absolute;left:1035px;top:620.40px;font:400 12.53px/12.53px 'Liberation Sans', sans-serif;color:#f0f6fc;white-space:nowrap;">Lock conversation</div><svg style="position:absolute;left:1011px;top:646px;" width="16" height="16" viewBox="0 0 16 16"><path fill="#9198a1" d="m11.294.984 3.722 3.722a1.75 1.75 0 0 1-.504 2.826l-1.327.613a3.089 3.089 0 0 0-1.707 2.084l-.584 2.454c-.317 1.332-1.972 1.8-2.94.832L5.75 11.311 1.78 15.28a.749.749 0 0 1-1.275-.326.749.749 0 0 1 .215-.734L4.69 10.25 2.487 8.047c-.968-.968-.5-2.623.832-2.94l2.454-.584a3.08 3.08 0 0 0 2.084-1.707l.613-1.327a1.75 1.75 0 0 1 2.824-.505ZM3.548 7.046l5.406 5.406c.139.139.366.07.415-.12l.583-2.454a4.583 4.583 0 0 1 2.544-3.104l1.327-.613a.25.25 0 0 0 .072-.404l-3.722-3.722a.25.25 0 0 0-.404.072l-.613 1.327a4.577 4.577 0 0 1-3.104 2.544l-2.454.583c-.19.05-.259.277-.12.416Z"/></svg><div style="position:absolute;left:1035px;top:648.47px;font:400 12.45px/12.45px 'Liberation Sans', sans-serif;color:#f0f6fc;white-space:nowrap;">Pin issue</div><svg style="position:absolute;left:1011px;top:674px;" width="16" height="16" viewBox="0 0 16 16"><path fill="#f85149" d="M11 1.75V3h2.25a.75.75 0 0 1 0 1.5H2.75a.75.75 0 0 1 0-1.5H5V1.75C5 .784 5.784 0 6.75 0h2.5C10.216 0 11 .784 11 1.75ZM4.496 6.675l.66 6.6a.25.25 0 0 0 .249.225h5.19a.25.25 0 0 0 .249-.225l.66-6.6a.75.75 0 0 1 1.492.149l-.66 6.6A1.748 1.748 0 0 1 10.595 15h-5.19a1.75 1.75 0 0 1-1.741-1.575l-.66-6.6a.75.75 0 1 1 1.492-.15ZM6.5 1.75V3h3V1.75a.25.25 0 0 0-.25-.25h-2.5a.25.25 0 0 0-.25.25Z"/></svg><div style="position:absolute;left:1035px;top:675.54px;font:400 12.36px/12.36px 'Liberation Sans', sans-serif;color:#f85149;white-space:nowrap;">Delete issue</div><div style="position:absolute;left:0px;top:120px;width:1366px;height:1px;background:#4a4849;"></div><div style="position:absolute;left:0px;top:0px;width:1px;height:720px;background:rgba(255,255,255,0.055);"></div><div style="position:absolute;left:1365px;top:0px;width:1px;height:720px;background:rgba(255,255,255,0.055);"></div><div style="position:absolute;left:1px;top:719px;width:1364px;height:1px;background:rgba(255,255,255,0.055);"></div>
</body></html>
